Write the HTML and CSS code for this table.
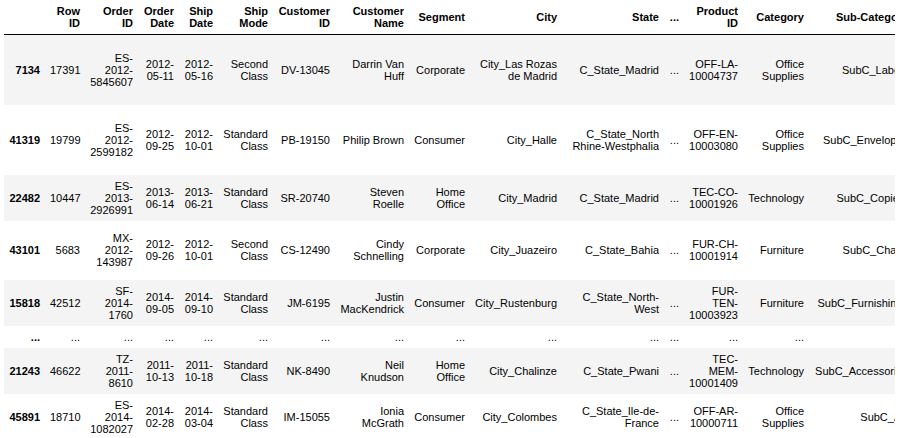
FILE: index.html
```html
<!DOCTYPE html>
<html>
<head>
<meta charset="utf-8">
<link rel="stylesheet" href="styles.css">
</head>
<body>
<div class="output">
<table class="dataframe">
  <colgroup>
    <col class="c-idx">
    <col class="c-rowid">
    <col class="c-orderid">
    <col class="c-orderdate">
    <col class="c-shipdate">
    <col class="c-shipmode">
    <col class="c-custid">
    <col class="c-custname">
    <col class="c-segment">
    <col class="c-city">
    <col class="c-state">
    <col class="c-ellipsis">
    <col class="c-prodid">
    <col class="c-category">
    <col class="c-subcat">
  </colgroup>
  <thead>
    <tr>
      <th></th>
      <th>Row ID</th>
      <th>Order ID</th>
      <th>Order Date</th>
      <th>Ship Date</th>
      <th>Ship Mode</th>
      <th>Customer ID</th>
      <th>Customer Name</th>
      <th>Segment</th>
      <th>City</th>
      <th>State</th>
      <th>...</th>
      <th>Product ID</th>
      <th>Category</th>
      <th>Sub-Category</th>
    </tr>
  </thead>
  <tbody>
    <tr class="h5">
      <th>7134</th><td>17391</td><td>ES-2012-5845607</td><td>2012-05-11</td><td>2012-05-16</td><td>Second Class</td><td>DV-13045</td><td>Darrin Van Huff</td><td>Corporate</td><td>City_Las Rozas de Madrid</td><td>C_State_Madrid</td><td>...</td><td>OFF-LA-10004737</td><td>Office Supplies</td><td>SubC_Labels</td>
    </tr>
    <tr class="h5">
      <th>41319</th><td>19799</td><td>ES-2012-2599182</td><td>2012-09-25</td><td>2012-10-01</td><td>Standard Class</td><td>PB-19150</td><td>Philip Brown</td><td>Consumer</td><td>City_Halle</td><td>C_State_North Rhine-Westphalia</td><td>...</td><td>OFF-EN-10003080</td><td>Office Supplies</td><td>SubC_Envelopes</td>
    </tr>
    <tr>
      <th>22482</th><td>10447</td><td>ES-2013-2926991</td><td>2013-06-14</td><td>2013-06-21</td><td>Standard Class</td><td>SR-20740</td><td>Steven Roelle</td><td>Home Office</td><td>City_Madrid</td><td>C_State_Madrid</td><td>...</td><td>TEC-CO-10001926</td><td>Technology</td><td>SubC_Copiers</td>
    </tr>
    <tr class="h4">
      <th>43101</th><td>5683</td><td>MX-2012-143987</td><td>2012-09-26</td><td>2012-10-01</td><td>Second Class</td><td>CS-12490</td><td>Cindy Schnelling</td><td>Corporate</td><td>City_Juazeiro</td><td>C_State_Bahia</td><td>...</td><td>FUR-CH-10001914</td><td>Furniture</td><td>SubC_Chairs</td>
    </tr>
    <tr>
      <th>15818</th><td>42512</td><td>SF-2014-1760</td><td>2014-09-05</td><td>2014-09-10</td><td>Standard Class</td><td>JM-6195</td><td>Justin MacKendrick</td><td>Consumer</td><td>City_Rustenburg</td><td>C_State_North-West</td><td>...</td><td>FUR-TEN-10003923</td><td>Furniture</td><td>SubC_Furnishings</td>
    </tr>
    <tr>
      <th>...</th><td>...</td><td>...</td><td>...</td><td>...</td><td>...</td><td>...</td><td>...</td><td>...</td><td>...</td><td>...</td><td>...</td><td>...</td><td>...</td><td>...</td>
    </tr>
    <tr>
      <th>21243</th><td>46622</td><td>TZ-2011-8610</td><td>2011-10-13</td><td>2011-10-18</td><td>Standard Class</td><td>NK-8490</td><td>Neil Knudson</td><td>Home Office</td><td>City_Chalinze</td><td>C_State_Pwani</td><td>...</td><td>TEC-MEM-10001409</td><td>Technology</td><td>SubC_Accessories</td>
    </tr>
    <tr>
      <th>45891</th><td>18710</td><td>ES-2014-1082027</td><td>2014-02-28</td><td>2014-03-04</td><td>Standard Class</td><td>IM-15055</td><td>Ionia McGrath</td><td>Consumer</td><td>City_Colombes</td><td>C_State_Ile-de-France</td><td>...</td><td>OFF-AR-10000711</td><td>Office Supplies</td><td>SubC_Art</td>
    </tr>
  </tbody>
</table>
</div>
</body>
</html>
```

FILE: styles.css
```css
body {
  margin: 0;
  background: #ffffff;
  font-family: "Liberation Sans", Arial, sans-serif;
  font-size: 11px;
  color: #000000;
}

.output {
  margin-left: 4px;
  width: 891px;
  overflow: hidden;
}

.dataframe {
  border-collapse: collapse;
  border-spacing: 0;
  border: none;
  font-size: 11px;
  table-layout: fixed;
  width: 909px;
}

.c-idx { width: 41px; }
.c-rowid { width: 40px; }
.c-orderid { width: 53px; }
.c-orderdate { width: 41px; }
.c-shipdate { width: 39px; }
.c-shipmode { width: 55px; }
.c-custid { width: 62px; }
.c-custname { width: 74px; }
.c-segment { width: 61px; }
.c-city { width: 92px; }
.c-state { width: 102px; }
.c-ellipsis { width: 20px; }
.c-prodid { width: 59px; }
.c-category { width: 66px; }
.c-subcat { width: 104px; }

.dataframe th,
.dataframe td {
  text-align: right;
  vertical-align: middle;
  padding: 5px;
  line-height: 12px;
  white-space: normal;
  border: none;
}

.dataframe thead th {
  font-weight: bold;
  border-bottom: 1px solid #000000;
}

.dataframe tbody th {
  font-weight: bold;
}

.dataframe tbody tr:nth-child(odd) {
  background: #f4f4f4;
}

.dataframe tbody tr.h5 {
  height: 70px;
}

.dataframe tbody tr.h4 {
  height: 59px;
}
```
